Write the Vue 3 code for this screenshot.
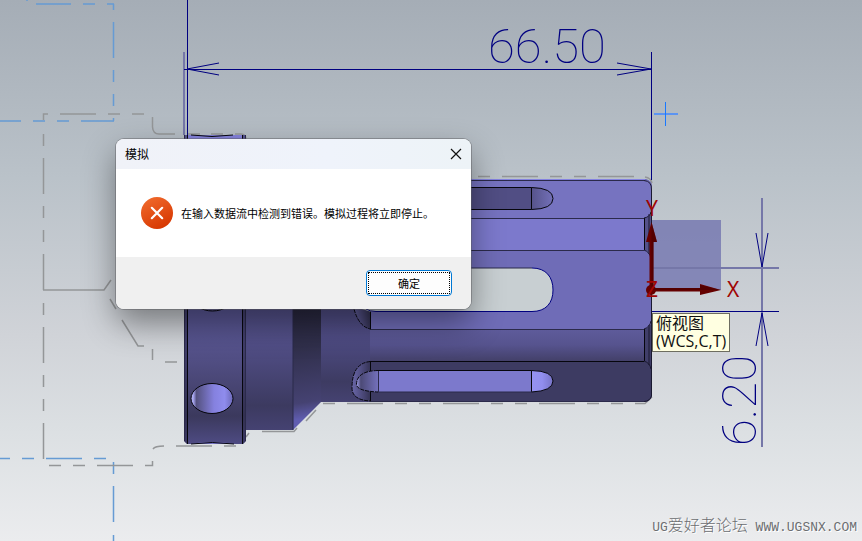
<script setup>
import { ref } from 'vue'

const open = ref(true)
</script>

<template>
  <main class="viewport">
    <svg class="model" viewBox="0 0 862 541" preserveAspectRatio="xMinYMin meet" role="img" aria-label="俯视图">
      <defs>
        <linearGradient id="ring" gradientUnits="userSpaceOnUse" x1="0" y1="135" x2="0" y2="444">
          <stop offset="0" stop-color="#8583dc" />
          <stop offset=".55" stop-color="#5d5a9c" />
          <stop offset=".7" stop-color="#545189" />
          <stop offset=".83" stop-color="#46436f" />
          <stop offset=".91" stop-color="#3b395d" />
          <stop offset="1" stop-color="#4e4b83" />
        </linearGradient>
        <linearGradient id="neck" gradientUnits="userSpaceOnUse" x1="0" y1="309" x2="0" y2="430">
          <stop offset="0" stop-color="#56538e" />
          <stop offset=".3" stop-color="#514e86" />
          <stop offset=".8" stop-color="#3c3a60" />
          <stop offset="1" stop-color="#454272" />
        </linearGradient>
        <linearGradient id="cone" gradientUnits="userSpaceOnUse" x1="295" y1="309" x2="312" y2="418">
          <stop offset="0" stop-color="#292840" />
          <stop offset=".35" stop-color="#302f4b" />
          <stop offset=".85" stop-color="#454272" />
          <stop offset="1" stop-color="#605db0" />
        </linearGradient>
        <linearGradient id="body" gradientUnits="userSpaceOnUse" x1="0" y1="300" x2="0" y2="402">
          <stop offset="0" stop-color="#524f87" />
          <stop offset=".35" stop-color="#504d86" />
          <stop offset=".8" stop-color="#3d3b62" />
          <stop offset="1" stop-color="#454271" />
        </linearGradient>
        <linearGradient id="groove" x1="0" y1="0" x2="0" y2="1">
          <stop offset="0" stop-color="#5e5b9b" />
          <stop offset=".5" stop-color="#56538e" />
          <stop offset="1" stop-color="#434069" />
        </linearGradient>
        <linearGradient id="hole" x1="0" y1="0" x2="1" y2="0">
          <stop offset="0" stop-color="#c2c0ff" />
          <stop offset=".06" stop-color="#a19fe8" />
          <stop offset=".13" stop-color="#54517f" />
          <stop offset=".55" stop-color="#8581df" />
          <stop offset=".8" stop-color="#8f8ced" />
          <stop offset="1" stop-color="#6c69b8" />
        </linearGradient>
        <linearGradient id="slotEnd" x1="0" y1="0" x2="1" y2="0">
          <stop offset="0" stop-color="#a5a3ef" />
          <stop offset=".2" stop-color="#4c4a76" />
          <stop offset="1" stop-color="#7370bb" />
        </linearGradient>
        <linearGradient id="cap" x1="0" y1="0" x2="1" y2="0">
          <stop offset="0" stop-color="#56538a" />
          <stop offset="1" stop-color="#7370b8" />
        </linearGradient>
        <linearGradient id="capLight" x1="0" y1="0" x2="1" y2="0">
          <stop offset="0" stop-color="#9592f2" />
          <stop offset=".5" stop-color="#918eee" />
          <stop offset="1" stop-color="#7673c5" />
        </linearGradient>
        <linearGradient id="pocket" x1="0" y1="0" x2="1" y2="0">
          <stop offset="0" stop-color="#6a67a8" />
          <stop offset=".35" stop-color="#57548c" />
          <stop offset="1" stop-color="#353354" />
        </linearGradient>
      </defs>

      <!-- stock and fixture outlines -->
      <g class="fixture">
        <path d="M36 4H71M83 4H95M107 4H114M26 0H28M113.500 4V10M113.500 22V58M113.500 70V82M113.500 94V106M113.500 118V121M0 121H21M33 121H45M57 121H69M81 121H114" />
        <path d="M0 458.500H10M22 458.500H34M46 458.500H82M94 458.500H106M113.500 462V474M113.500 486V522M113.500 535V541" />
      </g>
      <g class="outline">
        <path d="M43.500 120V114H48M60 114H96M108 114H120M132 114H144M43.500 134V146M43.500 158V194M43.500 206V218M43.500 230V242M43.500 254V290M43.500 303V315M43.500 327V363M43.500 375V387M43.500 399V411M43.500 423V459" />
        <path d="M43 290H104L111 280M110 299L116 309M122 320L138 346H144M152.500 349V360M165 362H177" />
        <path d="M152.500 117V127Q153 134 159 134H175M187 134H200M211 134H223M235 134H241Q246 134 246 140" />
        <path d="M49 465.500H61M73 465.500H85M97 465.500H133M145 465.500H152.500V461M153 449Q155 446 164 446M176 446H212M224 446H236" />
        <path d="M478 176.500H490M502 176.500H538M550 176.500H562M574 176.500H586M598 176.500H634M645 177Q651 178 652 183" />
        <path d="M246 437L249 433M262 431.500H294L297 428M306 421L316 410M323 403.500H335M347 403.500H383M395 403.500H407M419 403.500H431M443 403.500H479M491 403.500H503M515 403.500H527M539 403.500H575M587 403.500H599M611 403.500H623M635 403.500H645L652 397" />
      </g>

      <!-- clamping ring, neck and cone -->
      <path d="M184 135H246V441L243 444H187L184 441Z" fill="url(#ring)" />
      <path d="M184 135H187V444L184 441ZM243 135H246V441L243 444Z" fill="#292845" opacity=".5" />
      <path class="edge" d="M187.500 135V444M242.500 135V444" />
      <path class="edge faint" d="M184.500 135V441M245.500 135V441" />
      <path class="edge" d="M191 135Q212 138 233 135" />
      <path d="M190 444Q212 440 235 444Z" fill="#7b78cf" />
      <path class="edge" d="M191 444Q212 441 234 444" />
      <ellipse cx="212.500" cy="296" rx="21" ry="15" fill="#65629f" class="edge" />
      <ellipse cx="212" cy="398.500" rx="21" ry="15" fill="url(#hole)" />
      <ellipse class="edge" cx="212" cy="398.500" rx="21" ry="15" />
      <path d="M246 200H293V430H246Z" fill="url(#neck)" />
      <path d="M293 200H321V402L293 430Z" fill="url(#cone)" />
      <path class="edge faint" d="M293 200V430M321.500 200V402" />

      <!-- fluted body -->
      <path d="M321 179H645Q652 180 652 187V395Q651 401 645 402H321Z" fill="url(#body)" />
      <path d="M370 179H645Q652 180 652 187V212Q651 217 645 218H370Z" fill="#7673c0" />
      <path d="M370 218H645V250H370Z" fill="#7c79cc" />
      <path d="M645 218Q651 217 652 211V258Q650 251 645 250Z" fill="#54518a" />
      <path d="M354 305V250H645Q651 252 652 259V321Q651 327 645 329H370Q358 327 354 305Z" fill="#6f6cb7" />
      <path d="M353 305Q358 327 370 329V305Z" fill="url(#pocket)" />
      <path d="M370 329H645V361H370Z" fill="url(#groove)" />
      <path d="M645 329Q651 327 652 321V369Q650 363 645 361Z" fill="#403e69" />
      <path d="M370 361H645Q651 363 652 369V395Q651 401 645 402H370Z" fill="#3d3b62" />
      <path d="M370.500 361Q352 363 352 388Q352 400 370.500 401Z" fill="url(#pocket)" />
      <path d="M370 179.500H645" stroke="#8583e0" />
      <path class="edge faint" d="M370 180.500H644M370 218.500H644M370 250.500H644M370 329.500H644M370 401.500H644" />
      <path class="edge" d="M370 361.500H644M644.500 218V250M644.500 329V361M370.500 309V329M370.500 361V371M370.500 392V401" />
      <path class="edge thin" d="M644 180.500Q652 181 651.500 190V396Q650 401 644 401.500M644 218Q650 217 651 212M644 250Q650 252 651 259M644 329Q650 327 651 321M644 361Q650 363 651 369M649 214V254M649 325V365" />
      <path class="edge dash" d="M354 309Q359 327 370.500 329M370.500 361.500Q352 363 352 388Q352 400 370.500 401" />

      <!-- slots -->
      <path d="M450 187.500H531.500V209.500H450Z" fill="#514e84" />
      <path d="M531.500 187.500Q553 188 553 198.500Q553 209 531.500 209.500Z" fill="url(#cap)" />
      <path class="edge" d="M450 187.500H531.500Q553 188 553 198.500Q553 209 531.500 209.500H450M531.500 187.500V209.500" />
      <path d="M450 268H532C546 268 553 277 553 290S546 311.500 532 311.500H370L362 309H450Z" fill="#c8cfd2" />
      <path d="M450 268H532" class="edge faint" />
      <path class="navy" d="M532 268C546 268 553 277 553 290S546 311.500 532 311.500H376Q370 311.500 366 309" />
      <path d="M378 370.500H531.500V392H378Z" fill="#7c79cc" />
      <path d="M378 370.500Q357 371 356.500 384Q356 391 378 392Z" fill="url(#slotEnd)" />
      <path d="M531.500 370.500Q553 371 553 381Q553 391 531.500 392Z" fill="url(#capLight)" />
      <path class="edge" d="M378 370.500H531.500Q553 371 553 381Q553 391 531.500 392M531.500 370.500V392" />
      <path class="edge dash" d="M378 370.500Q357 371 356.500 384Q356 391 378 392" />
      <path class="edge faint" d="M378 392H532M378.500 371V392" />

      <!-- dimensions -->
      <path d="M652 220H721V290H652Z" fill="#6466aa" opacity=".68" />
      <path class="soft" d="M184 52V135M652 268H779M762 198V447" />
      <path class="navy" d="M187.500 0V135M651.500 52V180M184 69.500H652M219 63L187 69L219 75M617 63L651 69L617 75M652 311.500H779M756 233L762 267L768 233M756 346L762 313L768 346" />
      <text class="dimension" x="488" y="63">66.50</text>
      <text class="dimension" transform="translate(756 446) rotate(-90)">6.20</text>
      <path d="M654 114H678" stroke="#5c94f2" stroke-width="2" />
      <path d="M665.500 102V126" stroke="#1978ff" />

      <!-- work coordinate system -->
      <g fill="#650000">
        <path d="M649.500 290V242H646L651.500 222L657 242H653.500V290Z" />
        <path d="M651 288H700V284L721 290L700 295V291.500H651Z" />
        <circle cx="651" cy="290" r="5" />
      </g>
      <path d="M651.500 222L657 242H653.500V287H651.500ZM653 288H700V285L721 290H653Z" fill="#430000" opacity=".5" />
      <g class="axis">
        <text x="646" y="216">Y</text>
        <text x="727" y="297">X</text>
        <text x="646" y="297">Z</text>
      </g>
    </svg>

    <div class="view-tip" role="tooltip">俯视图<br />(WCS,C,T)</div>

    <section v-if="open" class="dialog" role="alertdialog" aria-labelledby="dialog-title" aria-describedby="dialog-message">
      <header class="titlebar">
        <h1 id="dialog-title">模拟</h1>
        <button class="close" type="button" aria-label="关闭" @click="open = false">
          <svg width="12" height="12" viewBox="0 0 12 12"><path d="M1 1L11 11M11 1L1 11" /></svg>
        </button>
      </header>
      <div class="content">
        <svg class="error" width="32" height="32" viewBox="0 0 32 32" aria-hidden="true">
          <defs>
            <linearGradient id="errorFill" x1=".2" y1="0" x2=".7" y2="1">
              <stop offset="0" stop-color="#f06a2c" />
              <stop offset="1" stop-color="#d63600" />
            </linearGradient>
          </defs>
          <circle cx="16" cy="16" r="16" fill="url(#errorFill)" />
          <path d="M10.800 10.800L21.200 21.200M21.200 10.800L10.800 21.200" stroke="#fff" stroke-width="2.200" stroke-linecap="round" />
        </svg>
        <p id="dialog-message">在输入数据流中检测到错误。模拟过程将立即停止。</p>
      </div>
      <footer class="actions">
        <button class="confirm" type="button" @click="open = false"><span>确定</span></button>
      </footer>
    </section>

    <footer class="watermark"><span>UG</span>爱好者论坛<span> WWW.UGSNX.COM</span></footer>
  </main>
</template>

<style>
body {
  margin: 0;
}
</style>

<style scoped>
.viewport {
  position: relative;
  display: flex;
  flex-direction: column;
  justify-content: flex-end;
  min-height: 100vh;
  overflow: hidden;
  background: linear-gradient(#a5adb6 0%, #bac2c9 33%, #d0d3d8 62%, #dce0e3 80%, #ebecee 100%);
  font-family: "Liberation Sans", "Noto Sans CJK SC", sans-serif;
}

.model {
  position: absolute;
  inset: 0;
  width: 100%;
  height: 100%;
}

.model path,
.model ellipse {
  vector-effect: non-scaling-stroke;
}

.fixture {
  fill: none;
  stroke: #669bd4;
  stroke-width: 1.5;
}

.outline {
  fill: none;
  stroke: #949698;
  stroke-width: 1.5;
}

.edge {
  fill: none;
  stroke: #06060d;
}

.faint {
  stroke: #2b2a4b;
}

.thin {
  stroke: #1a1930;
}

.dash {
  stroke-dasharray: 4 1;
}

.navy {
  fill: none;
  stroke: #000080;
}

.soft {
  fill: none;
  stroke: #7577a8;
  stroke-width: 2;
}

.dimension {
  fill: #000080;
  font-family: Roboto, sans-serif;
  font-size: 49px;
  font-weight: 100;
}

.axis {
  fill: #a00505;
  font-family: "Noto Sans", sans-serif;
  font-size: 21px;
}

.view-tip {
  position: absolute;
  left: 652px;
  top: 313px;
  padding: 0 3px 1px;
  border: 1px solid #6d6d60;
  background: #ffffe1;
  color: #111;
  font-family: "Open Sans", "Noto Sans CJK SC", sans-serif;
  font-size: 16px;
  line-height: 18px;
}

.dialog {
  position: absolute;
  left: 116px;
  top: 139px;
  display: flex;
  flex-direction: column;
  width: 355px;
  border-radius: 8px;
  background: #fff;
  box-shadow: 0 0 0 1px rgba(90, 90, 95, 0.45), 0 14px 32px rgba(0, 0, 0, 0.42);
  color: #000;
  font-family: "Noto Sans CJK SC", sans-serif;
}

.titlebar {
  display: flex;
  align-items: center;
  justify-content: space-between;
  height: 30px;
  padding: 0 3px 0 9px;
  border-radius: 8px 8px 0 0;
  background: linear-gradient(90deg, #f0f2f8, #eff3fb 60%, #edf3f7);
}

.titlebar h1 {
  margin: 0;
  font-size: 12px;
  font-weight: 400;
  line-height: 28px;
}

.close {
  display: grid;
  place-items: center;
  width: 24px;
  height: 24px;
  padding: 0;
  border: 0;
  background: none;
}

.close path {
  fill: none;
  stroke: #111;
  stroke-width: 1.2;
}

.content {
  display: flex;
  align-items: center;
  gap: 8px;
  height: 88px;
  padding: 0 25px;
}

.content p {
  margin: 0;
  font-size: 11px;
  line-height: 16px;
  white-space: nowrap;
}

.error {
  flex: none;
}

.actions {
  display: flex;
  justify-content: flex-end;
  padding: 13px 19px;
  border-radius: 0 0 8px 8px;
  background: #f0f0f0;
}

.confirm {
  display: flex;
  width: 86px;
  height: 26px;
  padding: 1px;
  border: 1px solid #0078d4;
  border-radius: 4px;
  background: #fdfdfd;
  color: #000;
  font-family: inherit;
  font-size: 11px;
  line-height: 20px;
}

.confirm span {
  flex: 1;
  border: 1px dotted #000;
}

.watermark {
  position: relative;
  align-self: flex-end;
  padding: 0 5px 4px 0;
  color: #6c6e71;
  font-family: "Noto Sans CJK SC", sans-serif;
  font-size: 16px;
  font-weight: 300;
  line-height: 18px;
  text-shadow: 1px 1px 0 #fff;
  white-space: pre;
}

.watermark span {
  font-family: "Liberation Mono", monospace;
  font-size: 13px;
}
</style>
